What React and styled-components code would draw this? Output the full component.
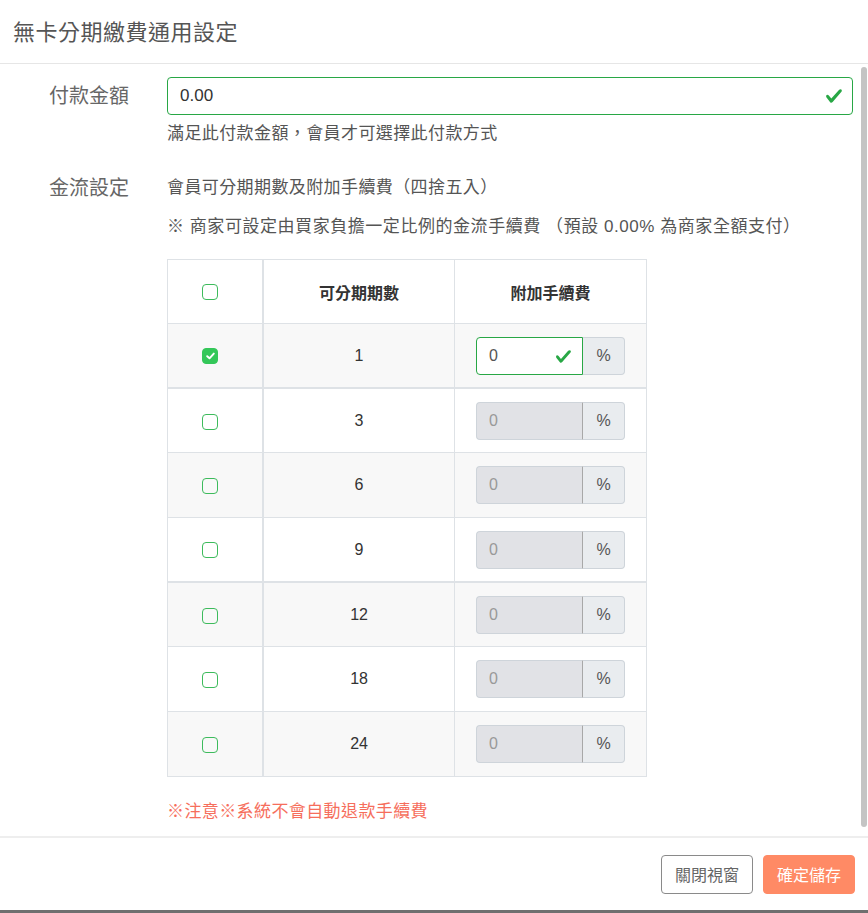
import React from "react";
import styled, { createGlobalStyle } from "styled-components";

const GlobalStyle = createGlobalStyle`
  html, body {
    margin: 0;
    padding: 0;
    background: #fff;
  }
  body {
    font-family: "Helvetica Neue", "Liberation Sans", "Noto Sans CJK TC", sans-serif;
  }
`;

const periods = [
    { n: 1, checked: true, thick: true },
    { n: 3 },
    { n: 6 },
    { n: 9, thick: true },
    { n: 12 },
    { n: 18 },
    { n: 24 },
];

const CheckMark = ({ size = 18 }) => (
    <svg width={size} height={size} viewBox="0 0 8 8">
        <path
            fill="#28a745"
            d="M2.3 6.73L.6 4.53c-.4-1.04.46-1.4 1.1-.8l1.1 1.4 3.4-3.8c.6-.63 1.6-.27 1.2.7l-4 4.6c-.43.5-.8.4-1.1.1z"
        />
    </svg>
);

const App = () => {
    return (
        <Modal>
            <GlobalStyle/>
            <Header>無卡分期繳費通用設定</Header>
            <Body>
                <Content>
                    <FormRow>
                        <Label>付款金額</Label>
                        <div>
                            <ValidBox>
                                <AmountInput defaultValue="0.00"/>
                                <ValidIcon><CheckMark/></ValidIcon>
                            </ValidBox>
                            <Help>滿足此付款金額，會員才可選擇此付款方式</Help>
                        </div>
                    </FormRow>

                    <FormRow $gap={23}>
                        <Label>金流設定</Label>
                        <div>
                            <Desc>會員可分期期數及附加手續費（四捨五入）</Desc>
                            <Note>※ 商家可設定由買家負擔一定比例的金流手續費 （預設 0.00% 為商家全額支付）</Note>

                            <FeeTable>
                                <thead>
                                <tr>
                                    <CheckCell as="th" $head><Box/></CheckCell>
                                    <HeadCell>可分期期數</HeadCell>
                                    <HeadCell>附加手續費</HeadCell>
                                </tr>
                                </thead>
                                <tbody>
                                {periods.map((p, i) => (
                                    <Row key={p.n} $striped={i % 2 === 0} $thick={p.thick}>
                                        <CheckCell>
                                            <Box $checked={p.checked}>
                                                {p.checked && (
                                                    <svg width="9" height="8" viewBox="0 0 9 8">
                                                        <path d="M1.2 4.2 L3.5 6.3 L7.8 1.6" stroke="#fff"
                                                              strokeWidth="1.9" fill="none"
                                                              strokeLinecap="round" strokeLinejoin="round"/>
                                                    </svg>
                                                )}
                                            </Box>
                                        </CheckCell>
                                        <NumCell>{p.n}</NumCell>
                                        <Cell>
                                            <Group>
                                                <FeeBox>
                                                    <FeeInput
                                                        defaultValue="0"
                                                        disabled={!p.checked}
                                                        $valid={p.checked}
                                                    />
                                                    {p.checked && <FeeIcon><CheckMark size={17}/></FeeIcon>}
                                                </FeeBox>
                                                <Addon>%</Addon>
                                            </Group>
                                        </Cell>
                                    </Row>
                                ))}
                                </tbody>
                            </FeeTable>

                            <Warn>※注意※系統不會自動退款手續費</Warn>
                        </div>
                    </FormRow>
                </Content>
                <ScrollThumb/>
            </Body>
            <Footer>
                <CloseButton>關閉視窗</CloseButton>
                <SaveButton>確定儲存</SaveButton>
            </Footer>
        </Modal>
    );
}

const Modal = styled.div`
  width: 868px;
  height: 913px;
  box-sizing: border-box;
  display: flex;
  flex-direction: column;
  background: #fff;
  border-bottom: 3px solid #6f6f6f;
`

const Header = styled.div`
  height: 64px;
  flex-shrink: 0;
  display: flex;
  align-items: center;
  padding: 0 0 3px 13px;
  box-sizing: border-box;
  border-bottom: 1px solid #e6e6e6;
  font-size: 22px;
  letter-spacing: 0.5px;
  color: #555;
`

const Body = styled.div`
  position: relative;
  height: 772px;
  flex-shrink: 0;
  overflow: hidden;
`

/* scrollbars are hidden in the capture, so the thumb is drawn over the body */
const ScrollThumb = styled.div`
  position: absolute;
  top: 3px;
  bottom: 9px;
  right: 1px;
  width: 6px;
  border-radius: 3px;
  background: #c4c4c4;
`

const Content = styled.div`
  padding: 13px 15px 25px 0;
`

const FormRow = styled.div`
  display: grid;
  grid-template-columns: 167px 1fr;
  align-items: start;
  margin-top: ${props => props.$gap || 0}px;
`

const Label = styled.div`
  padding-left: 49px;
  font-size: 20px;
  line-height: 38px;
  color: #666;
`

const ValidBox = styled.div`
  position: relative;
`

const AmountInput = styled.input`
  display: block;
  width: 100%;
  height: 38px;
  box-sizing: border-box;
  border: 1px solid #28a745;
  border-radius: 4px;
  padding: 0 40px 0 12px;
  font-family: inherit;
  font-size: 17px;
  color: #333;
  outline: none;
`

const ValidIcon = styled.span`
  position: absolute;
  right: 10px;
  top: 10px;
  line-height: 0;
`

const Help = styled.div`
  margin-top: 7px;
  font-size: 17px;
  line-height: 24px;
  letter-spacing: 0.4px;
  color: #555;
`

const Desc = styled.div`
  font-size: 17px;
  line-height: 38px;
  letter-spacing: 0.4px;
  color: #555;
`

const Note = styled.div`
  margin-top: 8px;
  font-size: 17px;
  line-height: 24px;
  letter-spacing: 0.55px;
  color: #555;
`

const FeeTable = styled.table`
  margin-top: 20px;
  width: 480px;
  border-collapse: collapse;
  border: 1px solid #dee2e6;
  font-size: 16px;
  color: #333;
`

const Row = styled.tr`
  background: ${props => props.$striped ? "#f8f8f8" : "#fff"};
  border-bottom: ${props => props.$thick ? 2 : 1}px solid #dee2e6;
`

const Cell = styled.td`
  height: 64.7px;
  padding: 0;
  border: 1px solid #dee2e6;
  text-align: center;
  vertical-align: middle;
  box-sizing: border-box;
`

const CheckCell = styled(Cell)`
  width: 95px;
  height: ${props => props.$head ? "64px" : "64.7px"};
  padding-right: 9px;
  border-right: 2px solid #dee2e6;
`

const HeadCell = styled(Cell).attrs({ as: "th" })`
  width: 191px;
  height: 64px;
  font-weight: bold;
  font-size: 16px;
`

const NumCell = styled(Cell)`
  font-size: 16px;
`

const Box = styled.span`
  display: inline-flex;
  align-items: center;
  justify-content: center;
  width: 16px;
  height: 16px;
  box-sizing: border-box;
  border-radius: 4px;
  border: 1.5px solid ${props => props.$checked ? "#34c759" : "#3dbb5c"};
  background: ${props => props.$checked ? "#34c759" : "transparent"};
  vertical-align: middle;
`

const Group = styled.div`
  display: inline-flex;
  width: 149px;
  height: 38px;
  vertical-align: middle;
`

const FeeBox = styled.div`
  position: relative;
  width: 107px;
  flex-shrink: 0;
`

const FeeInput = styled.input`
  display: block;
  width: 100%;
  height: 38px;
  box-sizing: border-box;
  padding: 0 12px;
  border: 1px solid ${props => props.$valid ? "#28a745" : "#ced4da"};
  border-right-color: ${props => props.$valid ? "#28a745" : "#a8a8a8"};
  border-radius: 4px 0 0 4px;
  background: ${props => props.$valid ? "#fff" : "#e1e2e6"};
  font-family: inherit;
  font-size: 16px;
  color: ${props => props.$valid ? "#555" : "#999"};
  outline: none;
`

const FeeIcon = styled.span`
  position: absolute;
  right: 11px;
  top: 11px;
  line-height: 0;
`

const Addon = styled.div`
  flex: 1;
  display: flex;
  align-items: center;
  justify-content: center;
  border: 1px solid #ced4da;
  border-left: none;
  border-radius: 0 4px 4px 0;
  background: #e9ecef;
  font-size: 16px;
  color: #555;
`

const Warn = styled.div`
  margin-top: 23px;
  font-size: 17px;
  line-height: 24px;
  letter-spacing: 0.4px;
  color: #f66e5c;
`

const Footer = styled.div`
  flex: 1;
  display: flex;
  align-items: center;
  justify-content: flex-end;
  gap: 10px;
  padding-right: 13px;
  border-top: 2px solid #eeeeee;
`

const CloseButton = styled.button`
  width: 92px;
  height: 39px;
  border: 1px solid #8a8a8a;
  border-radius: 4px;
  background: #fff;
  font-family: inherit;
  font-size: 16px;
  color: #666;
`

const SaveButton = styled.button`
  width: 92px;
  height: 39px;
  border: 1px solid #ff8a65;
  border-radius: 4px;
  background: #ff8a65;
  font-family: inherit;
  font-size: 16px;
  color: #fff;
`

export default App;
